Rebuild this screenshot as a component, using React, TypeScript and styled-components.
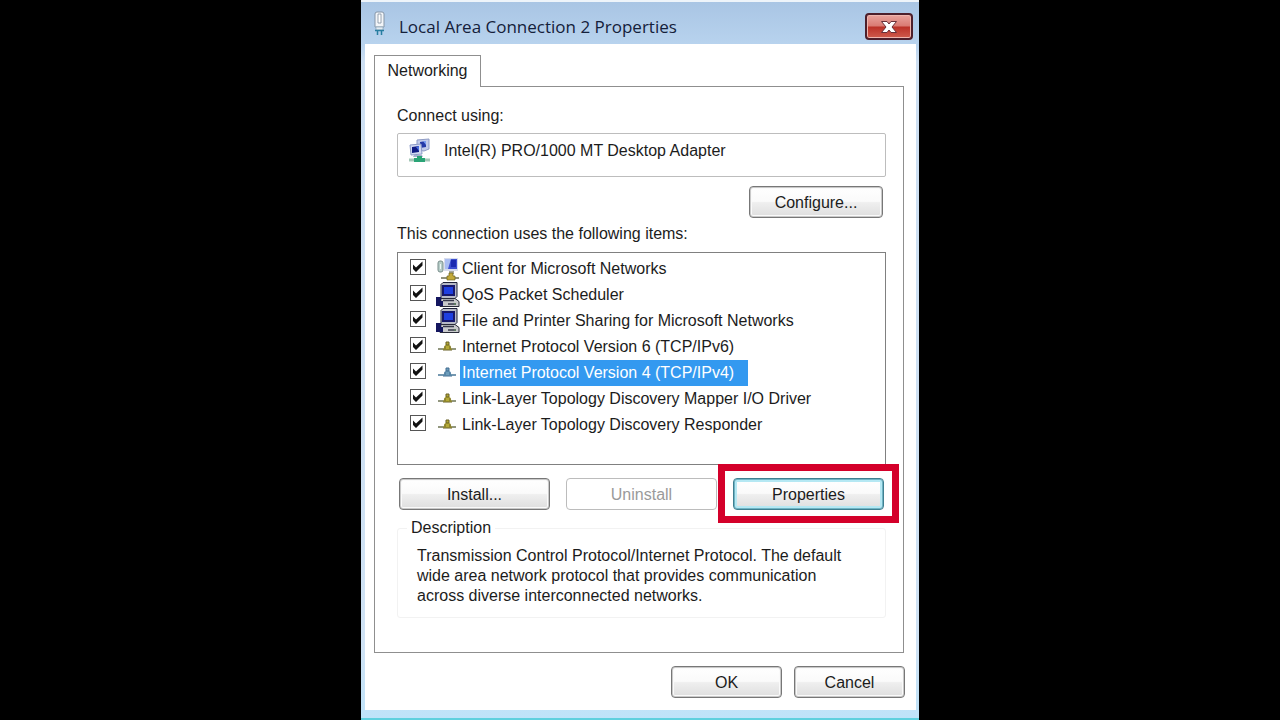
import React from "react";
import styled, { createGlobalStyle, css } from "styled-components";

const GlobalStyle = createGlobalStyle`
  *, *::before, *::after { box-sizing: border-box; }
  body {
    margin: 0;
    background: #000;
    color: #1c1c1c;
    font: 16px/20px "Liberation Sans", Arial, sans-serif;
  }
`;

const Desktop = styled.main`
  min-height: 100vh;
  display: flex;
  justify-content: center;
  background: #000;
`;

const Dialog = styled.section`
  width: 100%;
  max-width: 558px;
  display: flex;
  flex-direction: column;
  padding: 0 3px 8px 4px;
  background: linear-gradient(#a9c5e4, #b8d3ee 43px, #cddff2 60px, #cfe2f4 90%, #bfe3f9);
  border-top: 2px solid #eef4fa;
  border-bottom: 2px solid #5fd0de;
`;

const TitleBar = styled.header`
  display: flex;
  align-items: center;
  height: 42px;
  padding: 0 3px 0 8px;
`;

const Title = styled.h1`
  flex: 1;
  margin: 0 0 0 11px;
  padding-top: 8px;
  font: 17px/24px "Open Sans", "Noto Sans", sans-serif;
  color: #14203a;
`;

const CloseButton = styled.button`
  display: grid;
  place-items: center;
  width: 48px;
  height: 27px;
  margin-top: 7px;
  padding: 0;
  border: 2px solid #4d1f2b;
  border-radius: 4px;
  background: linear-gradient(#e9a49e, #d97a72 48%, #bb3127 52%, #cf5b4d);
  box-shadow: inset 0 0 0 1px #efb5ae;
`;

const Body = styled.div`
  flex: 1;
  display: flex;
  flex-direction: column;
  padding: 11px 11px 12px 9px;
  background: #fff;
`;

const TabStrip = styled.div`
  display: flex;
`;

const Tab = styled.button`
  width: 107px;
  height: 32px;
  margin-bottom: -1px;
  padding: 0 0 2px;
  border: 1px solid #8f8f8f;
  border-bottom: 0;
  background: #fff;
  color: inherit;
  font: inherit;
  z-index: 1;
`;

const Panel = styled.div`
  flex: 1;
  margin-right: 1px;
  padding: 19px 17px 33px 22px;
  border: 1px solid #8f8f8f;
`;

const Label = styled.div`
  line-height: 20px;
`;

const Adapter = styled.div`
  display: flex;
  gap: 12px;
  height: 44px;
  margin: 7px 0 9px;
  padding: 4px 10px;
  border: 1px solid #bdbdbd;
  border-radius: 2px;
`;

const AdapterName = styled.span`
  padding-top: 3px;
`;

const Button = styled.button<{ $width: number; $focused?: boolean }>`
  width: ${(p) => p.$width}px;
  height: 32px;
  padding: 1px 0 0;
  border: 1px solid #777;
  border-radius: 4px;
  background: linear-gradient(#fff, #fafafa 48%, #efefef 52%, #dedede);
  color: inherit;
  font: inherit;
  box-shadow: inset 0 0 0 1px #c9c9c9, inset 0 0 0 2px #fafafa;

  &:disabled {
    border: 1px solid #bcbcbc;
    background: #fff;
    box-shadow: none;
    color: #9a9a9a;
  }

  ${(p) =>
    p.$focused &&
    css`
      border-color: #3f7f90;
      box-shadow: inset 0 0 0 1px #6fb4c4, inset 0 0 0 3px #b5e8f3;
    `}
`;

const AlignEnd = styled.div`
  display: flex;
  justify-content: flex-end;
  padding-right: 3px;
  margin-bottom: 6px;
`;

const ItemList = styled.ul`
  height: 213px;
  margin: 8px 0 13px;
  padding: 3px 0 0 12px;
  border: 1px solid #808080;
  list-style: none;
`;

const Item = styled.li`
  display: flex;
  align-items: center;
  height: 26px;
`;

const ItemLabel = styled.label<{ $selected: boolean }>`
  display: flex;
  align-items: center;
  gap: 10px;
  white-space: nowrap;

  > span:last-child {
    margin-left: -10px;
    padding: 3px 14px 3px 2px;
    background: ${(p) => (p.$selected ? "#3399f0" : "transparent")};
    color: ${(p) => (p.$selected ? "#fff" : "inherit")};
  }
`;

const CheckBox = styled.span`
  display: grid;
  margin-bottom: 4px;

  > * {
    grid-area: 1 / 1;
  }

  input {
    appearance: none;
    width: 16px;
    height: 16px;
    margin: 0;
    border: 1px solid #555;
    background: #fff;
  }

  svg {
    pointer-events: none;
    visibility: hidden;
  }

  input:checked + svg {
    visibility: visible;
  }
`;

const Actions = styled.div`
  display: flex;
  justify-content: space-between;
  padding: 0 2px;
`;

const Highlight = styled.div`
  position: relative;

  &::after {
    content: "";
    position: absolute;
    inset: -14px -15px -13px;
    border: 7px solid #d4002a;
    pointer-events: none;
  }
`;

const Description = styled.fieldset`
  height: 100px;
  margin: 8px 0 0;
  padding: 8px 19px 0;
  border: 1px solid #f2f2f2;
  border-radius: 3px;

  legend {
    margin-left: -10px;
    padding: 0 4px;
  }

  p {
    max-width: 440px;
    margin: 0;
  }
`;

const Footer = styled.footer`
  display: flex;
  justify-content: flex-end;
  gap: 12px;
  margin-top: 13px;
`;

const TitleIcon = () => (
  <svg width="15" height="26" viewBox="0 0 15 26" aria-hidden="true">
    <path d="M2 4q0-2 2-2h5q2 0 2 2v13H2z" fill="#f2f5f8" stroke="#8696a8" />
    <path d="M5 4h3v9H5z" fill="#fff" stroke="#7f8e9e" strokeWidth=".8" />
    <path d="M3 17h7v3H3z" fill="#e3ebf2" stroke="#8aa3b8" strokeWidth=".7" />
    <path d="M2 20.500h9M4.500 20v5M8.500 20v5" stroke="#277da1" strokeWidth="1.500" />
  </svg>
);

const CloseIcon = () => (
  <svg width="18" height="14" viewBox="0 0 18 14" aria-hidden="true">
    <path d="M1.500 1.500h5.500l2 2.500 2-2.500h5.500l-4.500 5.500 4.500 5.500h-5.500L9 10l-2 2.500H1.500L6 7z" fill="#fff" stroke="#683039" />
  </svg>
);

const AdapterIcon = () => (
  <svg width="24" height="26" viewBox="0 0 24 26" aria-hidden="true">
    <path d="M9 2l12-1v10l-5 2-7-1z" fill="#c3cbea" stroke="#8e9bc4" />
    <path d="M12 4l6-1v6l-6 1z" fill="#2539a8" />
    <path d="M15 3l3 0v4z" fill="#7c9df0" />
    <path d="M2 7l11-1 1 10-11 1z" fill="#d4daf2" stroke="#8d9bc8" />
    <path d="M4 9l7-1v6l-7 1z" fill="#101b84" />
    <path d="M8 9l3-1v5z" fill="#4a70df" />
    <path d="M6 17h8l1 2H5z" fill="#a6afcf" />
    <path d="M1 22h21" stroke="#a3c7b7" strokeWidth="3" />
    <path d="M9 18h5v2h3v4H6v-4h3z" fill="#2aa476" />
  </svg>
);

const ClientIcon = () => (
  <svg width="24" height="26" viewBox="0 0 24 26" aria-hidden="true">
    <rect x="2" y="5" width="5" height="11" rx="2" fill="#b6cdc8" stroke="#788d8b" />
    <path d="M4 8h1v5H4z" fill="#eff7f5" />
    <path d="M8 2h14v13H8z" fill="#d7dced" />
    <path d="M9 3h12v10H9z" fill="#3d4fd0" />
    <path d="M9 3h6l-3 10H9z" fill="#a9bdf2" />
    <path d="M15 4h5v7h-5z" fill="#1c2bb0" />
    <path d="M13 15h5v3h-5z" fill="#a8aaa0" />
    <path d="M5 22h18" stroke="#8f917c" strokeWidth="2" />
    <path d="M13 17h4v3h2v4h-8v-4h2z" fill="#c2a93a" stroke="#6d621d" strokeWidth=".7" />
  </svg>
);

const ComputerIcon = () => (
  <svg width="24" height="26" viewBox="0 0 24 26" aria-hidden="true">
    <path d="M5 2.500l2-2h14v14l-2 2H5z" fill="#b7bac6" stroke="#20233b" />
    <path d="M6 3h13v11H6z" fill="#17186c" />
    <path d="M8 5h9v7H8z" fill="#1f3fe0" />
    <path d="M5 16.500h14l4 3v5H4z" fill="#c9cacc" stroke="#292b38" />
    <path d="M7 18.500h11M12 22h8" stroke="#37384a" strokeWidth="1.500" />
    <path d="M0 15h5v4h2v5H0z" fill="#14165f" />
    <path d="M18 21.500h2v1h-2z" fill="#5e9855" />
  </svg>
);

const ProtocolIcon = ({ selected }: { selected: boolean }) => {
  const body = selected ? "#6d9dbb" : "#b4a936";
  const edge = selected ? "#426d91" : "#696126";
  return (
    <svg width="24" height="26" viewBox="0 0 24 26" aria-hidden="true">
      <path d="M2 15h18" stroke={selected ? "#7598b0" : "#92977e"} strokeWidth="2" />
      <path d="M10 8h3v3h1l2 5H7l2-5h1z" fill={body} />
      <path d="M10 8h3v3h-3zM7 16h9M9 12v3M14 12v3" fill="none" stroke={edge} />
    </svg>
  );
};

const CheckMark = () => (
  <svg width="16" height="16" viewBox="0 0 16 16" aria-hidden="true">
    <path d="M3 5.500l3 3 6.500-6v4L6 13 3 10z" fill="#111" />
  </svg>
);

type Kind = "client" | "computer" | "protocol";

const items: { name: string; kind: Kind; selected?: boolean }[] = [
  { name: "Client for Microsoft Networks", kind: "client" },
  { name: "QoS Packet Scheduler", kind: "computer" },
  { name: "File and Printer Sharing for Microsoft Networks", kind: "computer" },
  { name: "Internet Protocol Version 6 (TCP/IPv6)", kind: "protocol" },
  { name: "Internet Protocol Version 4 (TCP/IPv4)", kind: "protocol", selected: true },
  { name: "Link-Layer Topology Discovery Mapper I/O Driver", kind: "protocol" },
  { name: "Link-Layer Topology Discovery Responder", kind: "protocol" },
];

const ItemIcon = ({ kind, selected }: { kind: Kind; selected: boolean }) => {
  if (kind === "client") return <ClientIcon />;
  if (kind === "computer") return <ComputerIcon />;
  return <ProtocolIcon selected={selected} />;
};

export default function App() {
  return (
    <>
      <GlobalStyle />
      <Desktop>
        <Dialog role="dialog" aria-labelledby="dialog-title">
          <TitleBar>
            <TitleIcon />
            <Title id="dialog-title">Local Area Connection 2 Properties</Title>
            <CloseButton type="button" aria-label="Close">
              <CloseIcon />
            </CloseButton>
          </TitleBar>
          <Body>
            <TabStrip role="tablist">
              <Tab type="button" role="tab" aria-selected="true">Networking</Tab>
            </TabStrip>
            <Panel role="tabpanel">
              <Label>Connect using:</Label>
              <Adapter>
                <AdapterIcon />
                <AdapterName>Intel(R) PRO/1000 MT Desktop Adapter</AdapterName>
              </Adapter>
              <AlignEnd>
                <Button type="button" $width={134}>Configure...</Button>
              </AlignEnd>
              <Label>This connection uses the following items:</Label>
              <ItemList>
                {items.map(({ name, kind, selected = false }) => (
                  <Item key={name}>
                    <ItemLabel $selected={selected}>
                      <CheckBox>
                        <input type="checkbox" defaultChecked />
                        <CheckMark />
                      </CheckBox>
                      <ItemIcon kind={kind} selected={selected} />
                      <span>{name}</span>
                    </ItemLabel>
                  </Item>
                ))}
              </ItemList>
              <Actions>
                <Button type="button" $width={151}>Install...</Button>
                <Button type="button" $width={151} disabled>Uninstall</Button>
                <Highlight>
                  <Button type="button" $width={151} $focused>Properties</Button>
                </Highlight>
              </Actions>
              <Description>
                <legend>Description</legend>
                <p>
                  Transmission Control Protocol/Internet Protocol. The default wide area network
                  protocol that provides communication across diverse interconnected networks.
                </p>
              </Description>
            </Panel>
            <Footer>
              <Button type="button" $width={111}>OK</Button>
              <Button type="button" $width={111}>Cancel</Button>
            </Footer>
          </Body>
        </Dialog>
      </Desktop>
    </>
  );
}
